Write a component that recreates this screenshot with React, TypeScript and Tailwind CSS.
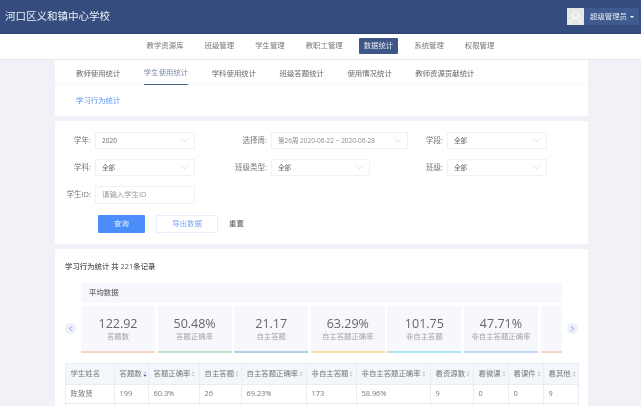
import { ChevronDown, ChevronLeft, ChevronRight, UserRound } from "lucide-react";

const navItems = ["教学资源库", "班级管理", "学生管理", "教职工管理", "数据统计", "系统管理", "权限管理"];
const tabs = ["教师使用统计", "学生使用统计", "学科使用统计", "班级答题统计", "使用情况统计", "教师资源贡献统计"];

const stats = [
  { value: "122.92", label: "答题数", bar: "bg-[#f8d3c7]" },
  { value: "50.48%", label: "答题正确率", bar: "bg-[#bfe3cc]" },
  { value: "21.17", label: "自主答题", bar: "bg-[#b9cde3]" },
  { value: "63.29%", label: "自主答题正确率", bar: "bg-[#f7e0a6]" },
  { value: "101.75", label: "非自主答题", bar: "bg-[#aee6f2]" },
  { value: "47.71%", label: "非自主答题正确率", bar: "bg-[#c3d9f8]" },
  { value: "", label: "", bar: "bg-[#f8d3c7]" },
];

const columns = [
  { name: "学生姓名", width: "w-[49px]", sort: false },
  { name: "答题数", width: "w-[34px]", sort: true },
  { name: "答题正确率", width: "w-[51px]", sort: true },
  { name: "自主答题", width: "w-[42px]", sort: true },
  { name: "自主答题正确率", width: "w-[65px]", sort: true },
  { name: "非自主答题", width: "w-[50px]", sort: true },
  { name: "非自主答题正确率", width: "w-[74px]", sort: true },
  { name: "看资源数", width: "w-[43px]", sort: true },
  { name: "看微课", width: "w-[35px]", sort: true },
  { name: "看课件", width: "w-[35px]", sort: true },
  { name: "看其他", width: "w-[35px]", sort: true },
];

const row = ["陈致贤", "199", "60.3%", "26", "69.23%", "173", "58.96%", "9", "0", "0", "9"];

function SortIcon({ active }: { active?: boolean }) {
  return (
    <svg viewBox="0 0 5 8" className="ml-[1px] h-[8px] w-[4px] shrink-0">
      <path d="M2.5 0.5 L4.5 3 L0.5 3 Z" fill="#c2c7d0" />
      <path d="M2.5 7.5 L4.5 5 L0.5 5 Z" fill={active ? "#34508f" : "#c2c7d0"} />
    </svg>
  );
}

function Select({ value, width, muted }: { value: string; width: string; muted?: boolean }) {
  return (
    <div className={`flex h-[17px] items-center justify-between border border-[#eff1f6] bg-white pl-[6px] pr-[3px] ${width}`}>
      <span className={`whitespace-nowrap text-[6.5px] ${muted ? "text-[#8a8a8a]" : "text-[#666]"}`}>{value}</span>
      <ChevronDown className="h-[13px] w-[13px] shrink-0 text-[#c5c8ce]" strokeWidth={1} />
    </div>
  );
}

function Label({ text, width }: { text: string; width: string }) {
  return <span className={`shrink-0 whitespace-nowrap pr-[4px] text-right text-[7.5px] text-[#777] ${width}`}>{text}</span>;
}

function App() {
  return (
    <div
      className="h-[406px] w-[641px] overflow-hidden bg-[#f0f2f7] blur-[0.3px]"
      style={{ fontFamily: '"Open Sans", "Noto Sans CJK SC", sans-serif' }}
    >
      <header className="flex h-[34px] items-center justify-between border-b border-[#2d4472] bg-[#354d7e] pl-[5px] pr-[2px]">
        <h1 className="text-[10.5px] font-normal text-[#eef1f6]">河口区义和镇中心学校</h1>
        <div className="flex h-[17px] items-center bg-[#3f5a8f]">
          <div className="flex h-[17px] w-[17px] items-end justify-center overflow-hidden bg-[#e6e6e6]">
            <UserRound className="h-[15px] w-[15px] text-white" strokeWidth={1.6} />
          </div>
          <span className="ml-[6px] text-[7.4px] text-[#e6eaf2]">超级管理员</span>
          <span className="ml-[3px] mr-[5px] h-0 w-0 border-x-[2px] border-t-[2.5px] border-x-transparent border-t-white" />
        </div>
      </header>

      <nav className="flex h-[25px] items-center justify-center gap-[11px] bg-white pb-[1px] shadow-[0_1px_1px_#e4e6ea]">
        {navItems.map((item) => (
          <span
            key={item}
            className={`flex h-[16px] items-center rounded-[1px] px-[5px] text-[7.4px] ${
              item === "数据统计" ? "bg-[#3e5687] text-[#e6eaf2]" : "text-[#777]"
            }`}
          >
            {item}
          </span>
        ))}
      </nav>

      <main className="ml-[55px] w-[533px]">
        <section className="mt-[1px] h-[56px] bg-white">
          <div className="flex h-[25px] gap-[23.5px] border-b border-[#f5f6f8] pl-[21px]">
            {tabs.map((tab) => (
              <span
                key={tab}
                className={`flex h-[25px] items-center whitespace-nowrap pt-[2px] text-[7.4px] ${
                  tab === "学生使用统计" ? "border-b-[1px] border-[#4a5f8f] text-[#7f8ba3]" : "text-[#666]"
                }`}
              >
                {tab}
              </span>
            ))}
          </div>
          <p className="mt-[10px] pl-[21px] text-[7.4px] leading-[10px] text-[#5a95f5]">学习行为统计</p>
        </section>

        <section className="mt-[5px] h-[123px] bg-white pt-[11px]">
          <div className="grid grid-cols-[140px_213px_140px] gap-y-[10px]">
            <div className="flex items-center">
              <Label text="学年:" width="w-[40px]" />
              <Select value="2020" width="w-[100px]" />
            </div>
            <div className="flex items-center">
              <Label text="选择周:" width="w-[76px]" />
              <Select value="第26周 2020-06-22 ~ 2020-06-28" width="w-[137px]" muted />
            </div>
            <div className="flex items-center">
              <Label text="学段:" width="w-[39px]" />
              <Select value="全部" width="w-[100px]" />
            </div>
            <div className="flex items-center">
              <Label text="学科:" width="w-[40px]" />
              <Select value="全部" width="w-[100px]" />
            </div>
            <div className="flex items-center">
              <Label text="班级类型:" width="w-[76px]" />
              <Select value="全部" width="w-[99px]" />
            </div>
            <div className="flex items-center">
              <Label text="班级:" width="w-[39px]" />
              <Select value="全部" width="w-[100px]" />
            </div>
            <div className="flex items-center">
              <Label text="学生ID:" width="w-[40px]" />
              <div className="flex h-[18px] w-[100px] items-center border border-[#eff1f6] pl-[6px] text-[7.4px] text-[#999]">
                请输入学生ID
              </div>
            </div>
          </div>
          <div className="ml-[43px] mt-[11px] flex h-[18px] items-center">
            <button className="h-[18px] w-[47px] rounded-[1px] bg-[#4a8dfb] text-[7.4px] text-[#e8f0ff]">查询</button>
            <button className="ml-[11px] h-[18px] w-[62px] rounded-[1px] border border-[#e8eefb] text-[7.4px] text-[#7aa7f7]">
              导出数据
            </button>
            <span className="ml-[11px] text-[7.4px] text-[#555]">重置</span>
          </div>
        </section>

        <section className="mt-[5px] h-[200px] overflow-hidden bg-white pl-[10px] pt-[12px]">
          <h2 className="text-[7.4px] font-medium leading-[10px] text-[#555]">学习行为统计 共 221条记录</h2>

          <div className="mt-[12px] flex items-center">
            <span className="mr-[5px] mt-[20px] flex h-[11px] w-[11px] items-center justify-center rounded-full bg-[#edf0f6] text-[#5a95f5]">
              <ChevronLeft className="h-[7px] w-[7px]" strokeWidth={3} />
            </span>
            <div className="w-[481px] overflow-hidden">
              <div className="flex h-[20px] items-center bg-[#f6f8fd] pl-[8px] text-[7.4px] font-medium text-[#666]">平均数据</div>
              <div className="mt-[3px] flex gap-[2.6px]">
                {stats.map((stat, i) => (
                  <div key={i} className="flex h-[47px] w-[74px] shrink-0 flex-col bg-[#f6f8fd]">
                    <div className="flex flex-1 flex-col items-center pt-[9.5px]">
                      <span className="text-[12.5px] leading-[15px] text-[#666]">{stat.value}</span>
                      <span className="text-[7.4px] leading-[10px] text-[#a5a5a5]">{stat.label}</span>
                    </div>
                    <div className={`h-[2px] ${stat.bar}`} />
                  </div>
                ))}
              </div>
            </div>
            <span className="ml-[5px] mt-[20px] flex h-[11px] w-[11px] items-center justify-center rounded-full bg-[#edf0f6] text-[#5a95f5]">
              <ChevronRight className="h-[7px] w-[7px]" strokeWidth={3} />
            </span>
          </div>

          <table className="mt-[10px] w-[513px] table-fixed border-collapse text-[7.4px] text-[#777]">
            <thead>
              <tr className="h-[21px] bg-[#f3f7fc]">
                {columns.map((col, i) => (
                  <th key={col.name} className={`border border-[#e8edf3] p-0 pl-[4.5px] text-left font-normal ${col.width}`}>
                    <span className="flex items-center whitespace-nowrap">
                      {col.name}
                      {col.sort && <SortIcon active={i === 1} />}
                    </span>
                  </th>
                ))}
              </tr>
            </thead>
            <tbody>
              <tr className="h-[19px]">
                {row.map((cell, i) => (
                  <td key={i} className="border border-[#e8edf3] p-0 pl-[4.5px]">
                    {cell}
                  </td>
                ))}
              </tr>
              <tr className="h-[19px]">
                {row.map((_, i) => (
                  <td key={i} className="border border-[#e8edf3] p-0" />
                ))}
              </tr>
            </tbody>
          </table>
        </section>
      </main>
    </div>
  );
}

export default App;
